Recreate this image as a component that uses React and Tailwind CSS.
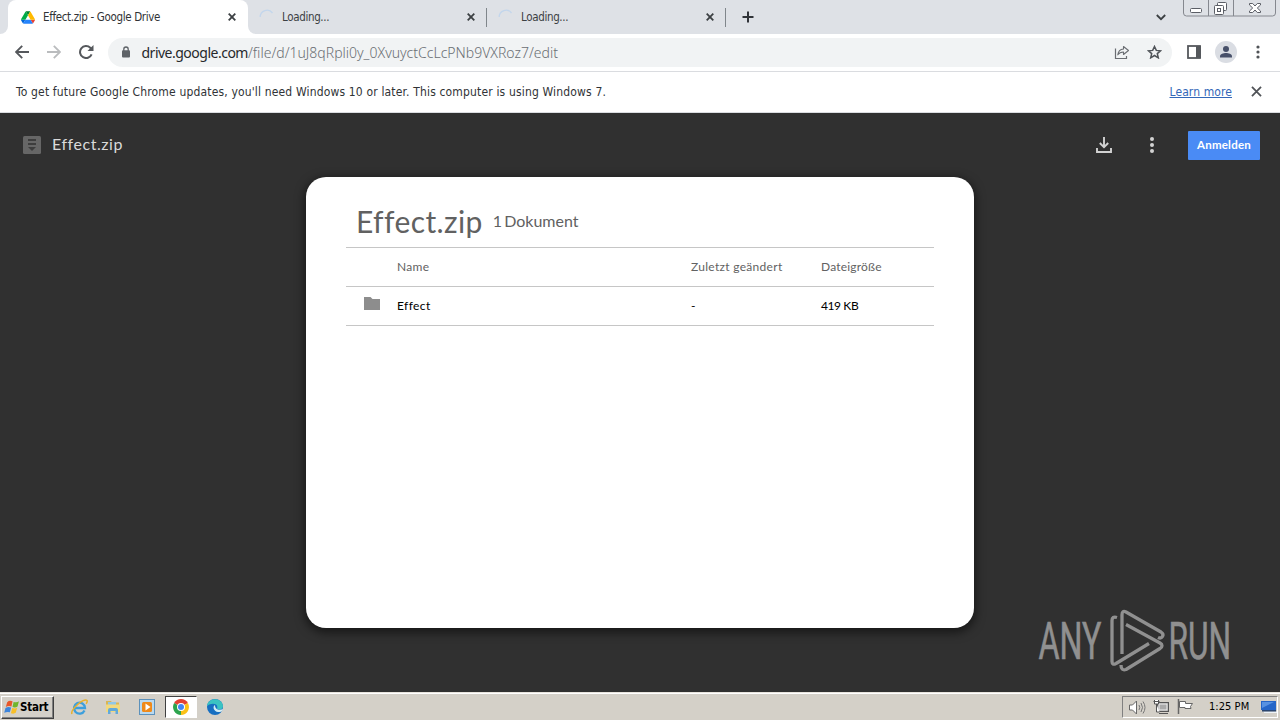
import React from 'react';

const UI_FONT = "font-['DejaVu_Sans_Condensed','DejaVu_Sans',sans-serif]";

// Small x used by the tabs and the info bar
const CloseIcon = ({ size = 8, color = '#3c4043', weight = 1.8 }) => (
  <svg width={size} height={size} viewBox="0 0 8 8" className="shrink-0">
    <path d="M.7.7l6.6 6.6M7.3.7L.7 7.3" stroke={color} strokeWidth={weight} fill="none" />
  </svg>
);

const DriveIcon = () => (
  <svg width="14" height="13" viewBox="0 0 87.3 78" className="shrink-0">
    <path d="m6.6 66.85 3.85 6.65c.8 1.4 1.95 2.5 3.3 3.3l13.75-23.8h-27.5c0 1.55.4 3.1 1.2 4.5z" fill="#0066da" />
    <path d="m43.65 25-13.75-23.8c-1.35.8-2.5 1.9-3.3 3.3l-25.4 44a9.06 9.06 0 0 0-1.2 4.5h27.5z" fill="#00ac47" />
    <path d="m73.55 76.8c1.35-.8 2.5-1.9 3.3-3.3l1.6-2.75 7.65-13.25c.8-1.4 1.2-2.95 1.2-4.5h-27.502l5.852 11.5z" fill="#ea4335" />
    <path d="m43.65 25 13.75-23.8c-1.35-.8-2.9-1.2-4.5-1.2h-18.5c-1.6 0-3.15.45-4.5 1.2z" fill="#00832d" />
    <path d="m59.8 53h-32.3l-13.75 23.8c1.35.8 2.9 1.2 4.5 1.2h50.8c1.6 0 3.15-.45 4.5-1.2z" fill="#2684fc" />
    <path d="m73.4 26.5-12.7-22c-.8-1.4-1.95-2.5-3.3-3.3l-13.75 23.8 16.15 28h27.45c0-1.55-.4-3.1-1.2-4.5z" fill="#ffba00" />
  </svg>
);

const Spinner = () => (
  <svg width="16" height="16" viewBox="0 0 16 16" className="shrink-0">
    <path d="M1.2 8A6.8 6.8 0 0 1 13.5 4" stroke="#c3d6ec" strokeWidth="1.3" fill="none" />
  </svg>
);

const LoadingTab = () => (
  <div className="flex h-[34px] w-[239px] items-center pl-[11px]">
    <Spinner />
    <span className="ml-[7px] flex-1 text-[11.5px] leading-4 tracking-[-0.35px] text-[#3c4043]">Loading...</span>
    <CloseIcon />
    <span className="ml-[11px] h-[19px] w-px bg-[#80868b]" />
  </div>
);

const WindowButtons = () => (
  <svg width="94" height="17" viewBox="0 0 94 17" className="absolute top-0 right-[3px]">
    <path d="M.5 0v13a3 3 0 0 0 3 3h86a3 3 0 0 0 3-3V0M25.5 0v16M50.5 0v16" fill="none" stroke="#85888f" />
    <g fill="#fff" stroke="#5b5e66">
      <rect x="7.500" y="8.500" width="11" height="4" rx="1" />
      <rect x="34.500" y="2.500" width="9" height="8" rx="1" />
      <rect x="31.500" y="5.500" width="9" height="9" rx="1" />
      <rect x="34.500" y="8.500" width="3" height="3" />
      <path d="M66.500 3.500h3.200l2.300 2.500 2.300-2.500h3.200v1.500L74.300 8l3.200 3v1.500h-3.200L72 10l-2.300 2.500h-3.200V11l3.200-3-3.200-3z" />
    </g>
  </svg>
);

const TabStrip = () => (
  <div className="relative flex h-[34px] items-center bg-[#dee1e6]">
    <div className="flex h-full w-2 items-end bg-white">
      <div className="h-full w-full rounded-br-lg bg-[#dee1e6]" />
    </div>
    <div className="flex h-full w-[240px] items-center rounded-t-lg bg-white pr-[12px] pl-[13px]">
      <DriveIcon />
      <span className="ml-[8px] flex-1 text-[11.5px] leading-4 tracking-[-0.35px] text-[#303336]">Effect.zip - Google Drive</span>
      <CloseIcon />
    </div>
    <div className="flex h-full w-[239px] bg-white">
      <div className="h-full w-full rounded-bl-lg bg-[#dee1e6]">
        <LoadingTab />
      </div>
    </div>
    <LoadingTab />
    <svg width="12" height="12" viewBox="0 0 12 12" className="ml-4">
      <path d="M6 .5v11M.5 6h11" stroke="#303338" strokeWidth="2" />
    </svg>
    <svg width="10" height="7" viewBox="0 0 10 7" className="absolute top-[14px] left-[1156px]">
      <path d="M.8 1l4.200 4.200L9.200 1" stroke="#3c4043" strokeWidth="1.800" fill="none" />
    </svg>
    <WindowButtons />
  </div>
);

const Toolbar = () => (
  <div className="flex h-[38px] items-center border-b border-[#dadce0] bg-white pb-px pl-[15px]">
    <svg width="14" height="14" viewBox="0 0 14 14">
      <path d="M14 7H1.500M7.200.8L1 7l6.200 6.200" stroke="#55585c" strokeWidth="1.900" fill="none" />
    </svg>
    <svg width="14" height="14" viewBox="0 0 14 14" className="ml-[18px]">
      <path d="M0 7h12.500M6.800.8L13 7l-6.200 6.200" stroke="#babcbe" strokeWidth="1.800" fill="none" />
    </svg>
    <svg width="15" height="14" viewBox="0 0 15 14" className="ml-[18px]">
      <path d="M12.600 9.300A6 6 0 1 1 11.300 2.800L13 4.500" stroke="#55585c" strokeWidth="2" fill="none" />
      <path d="M14.500 0v6h-6z" fill="#55585c" />
    </svg>
    <div className="ml-[14px] flex h-[29px] w-[1064px] items-center rounded-full bg-[#f1f3f4] pl-[14px]">
      <svg width="8" height="12" viewBox="0 0 8 12">
        <path d="M1.800 5V3.200a2.200 2.200 0 0 1 4.400 0V5" stroke="#5f6368" strokeWidth="1.300" fill="none" />
        <rect y="4.300" width="8" height="7.200" rx="1" fill="#5f6368" />
      </svg>
      <span className="ml-[11.500px] flex-1 pt-px font-['Noto_Sans',sans-serif] text-[14px] leading-5 font-light whitespace-nowrap text-[#6a6e73]">
        <span className="font-normal tracking-[-0.5px] text-[#26282b]">drive.google.com</span>
        <span>/file/d/1uJ8qRpli0y_0XvuyctCcLcPNb9VXRoz7/edit</span>
      </span>
      <svg width="16" height="15" viewBox="0 0 16 15" className="mr-[17px]">
        <path d="M1.500 3.500v10h11V11" stroke="#6a6d72" strokeWidth="1.200" fill="none" />
        <path d="M9.500 1.500l5 4-5 4V7C6.500 7 5 8 3.800 9.800 4.200 6.500 6 4.300 9.500 4z" stroke="#6a6d72" strokeWidth="1.100" fill="none" strokeLinejoin="round" />
      </svg>
      <svg width="15" height="14" viewBox="0 0 15 14" className="mr-[10px]">
        <path d="M7.500 1.500l1.800 3.900 4.200.4-3.200 2.800 1 4.200-3.800-2.300-3.800 2.300 1-4.200L1.500 5.800l4.200-.4z" stroke="#505459" strokeWidth="1.500" fill="none" />
      </svg>
    </div>
    <svg width="14" height="14" viewBox="0 0 14 14" className="ml-[15px]">
      <rect x="1" y="1" width="12" height="12" fill="none" stroke="#55585c" strokeWidth="1.800" />
      <path d="M9 1h5v12H9z" fill="#55585c" />
    </svg>
    <svg width="22" height="22" viewBox="0 0 22 22" className="ml-[14px]">
      <circle cx="11" cy="11" r="11" fill="#dadde3" />
      <circle cx="11" cy="8" r="3" fill="#475069" />
      <path d="M5 16.500v-1.300c0-2 3.500-3.200 6-3.200s6 1.200 6 3.200v1.300z" fill="#475069" />
    </svg>
    <svg width="4" height="14" viewBox="0 0 4 14" className="ml-[19px]" fill="#505357">
      <circle cx="2" cy="2" r="1.600" />
      <circle cx="2" cy="7" r="1.600" />
      <circle cx="2" cy="12" r="1.600" />
    </svg>
  </div>
);

const InfoBar = () => (
  <div className="flex h-[41px] items-center border-b border-[#dadce0] bg-white pr-[18.500px] pb-px pl-4 text-[12px] leading-4">
    <span className="flex-1 tracking-[0.160px] whitespace-nowrap text-[#303336]">
      To get future Google Chrome updates, you'll need Windows 10 or later. This computer is using Windows 7.
    </span>
    <a className="mr-[18.500px] tracking-[0.1px] text-[#3367b8] underline">Learn more</a>
    <CloseIcon size={11} color="#505357" weight={1.300} />
  </div>
);

const ViewerHeader = () => (
  <div className="flex h-16 items-center pr-5 pl-[23px]">
    <svg width="18" height="18" viewBox="0 0 18 18">
      <rect width="18" height="18" rx="1.500" fill="#666" />
      <path d="M5 3h8v2H5zM5 7h8v2H5zM5 11h8l-4 4z" fill="#3d3d3d" />
    </svg>
    <span className="ml-[11px] flex-1 pb-0.5 font-['Lato',sans-serif] text-[16px] leading-5 tracking-[0.550px] text-[#dadada]">Effect.zip</span>
    <svg width="16" height="16" viewBox="0 0 16 16">
      <path d="M8 0v10M3.800 6L8 10.200 12.200 6M1 11v4h14v-4" stroke="#d2d2d2" strokeWidth="1.900" fill="none" />
    </svg>
    <svg width="4" height="16" viewBox="0 0 4 16" className="ml-[38px]" fill="#d2d2d2">
      <circle cx="2" cy="2" r="2" />
      <circle cx="2" cy="8" r="2" />
      <circle cx="2" cy="14" r="2" />
    </svg>
    <button className="ml-[34px] h-[29px] w-[72px] rounded-[1px] bg-[#4a8bf5] font-['Lato',sans-serif] text-[11.5px] font-bold tracking-[0.2px] text-white">Anmelden</button>
  </div>
);

const Row = ({ icon, name, modified, size, className, sizeClass = '' }) => (
  <div className={`flex h-[39px] items-center border-b border-[#c6c6c6] text-[12px] leading-4 ${className}`}>
    <div className="w-[51px] pl-[18px]">{icon}</div>
    <div className="w-[294px]">{name}</div>
    <div className="w-[130px]">{modified}</div>
    <div className={sizeClass}>{size}</div>
  </div>
);

const FolderIcon = () => (
  <svg width="16" height="13" viewBox="0 0 16 13" className="mb-[5px]">
    <path d="M0 0h6.500l2 2H16v11H0z" fill="#8d8d8d" />
  </svg>
);

const ArchiveCard = () => (
  <div className="mx-auto h-[451px] w-[668px] rounded-[20px] bg-white px-10 pt-[21px] font-['Lato',sans-serif] shadow-[0_3px_10px_2px_rgba(0,0,0,0.5)]">
    <div className="flex h-[50px] items-center border-b border-[#c6c6c6] pb-[3px] pl-[10px] text-[#616161]">
      <h1 className="text-[30px] leading-9 tracking-[0.400px]">Effect.zip</h1>
      <span className="ml-[10px] text-[16px] leading-5 [word-spacing:-2px]">1 Dokument</span>
    </div>
    <Row name="Name" modified="Zuletzt geändert" size="Dateigröße" className="tracking-[0.300px] text-[#626262]" sizeClass="tracking-[0.200px]" />
    <Row icon={<FolderIcon />} name="Effect" modified="-" size="419 KB" className="tracking-[0.400px] text-black" sizeClass="tracking-[-0.400px]" />
  </div>
);

const Watermark = () => (
  <svg width="200" height="64" viewBox="0 0 200 64" className="absolute top-[496px] left-[1038px] overflow-visible" fill="#909090">
    <g fontFamily="Roboto, sans-serif" fontSize="52" stroke="#909090" strokeWidth="0.6">
      <text y="50" transform="translate(.5) scale(.62 1)">ANY</text>
      <text y="50" transform="translate(130.500) scale(.61 1)">RUN</text>
    </g>
    <g fill="none" stroke="#909090" strokeWidth="3.300" strokeLinejoin="round">
      <path d="M79 8.500q-5-1.500-5 3v41q0 4 4 2l33-20" />
      <path d="M84 45V6q0-5 4-3l35 20q3 2 1.500 4.500-1.500 2.500-4.500 1" />
      <path d="M83 56q0 6 5 4.500l34-21q4-3 0-5.500L88 15.500" />
    </g>
  </svg>
);

const ChromeIcon = () => (
  <svg width="16" height="16" viewBox="0 0 16 16">
    <path d="M8 8L1.100 4a8 8 0 0 1 13.800 0z" fill="#e34133" />
    <path d="M8 8l6.900-4A8 8 0 0 1 8 16z" fill="#fbc116" />
    <path d="M8 8v8A8 8 0 0 1 1.100 4z" fill="#2da44e" />
    <circle cx="8" cy="8" r="4" fill="#fff" />
    <circle cx="8" cy="8" r="3" fill="#4285f4" />
  </svg>
);

const Taskbar = () => (
  <div className="flex h-7 items-center border-t border-[#e8e4dd] bg-[#d4d0c8] pt-px shadow-[inset_0_1px_0_#fff]">
    <button className="ml-px flex h-[23px] w-[53px] items-center border border-t-white border-r-[#404040] border-b-[#404040] border-l-white pl-[2px] text-[11.5px] font-bold tracking-[-0.250px] text-black shadow-[inset_-1px_-1px_0_#808080]">
      <svg width="16" height="16" viewBox="0 0 15 15" className="shrink-0">
        <path d="M3 3q2-2 5-.8L7 7Q4 6 1.700 7.500z" fill="#e8572a" />
        <path d="M9 2.700q3 1 5-.5L12.700 7q-2 1.500-4.700.5z" fill="#70b52b" />
        <path d="M1.400 8.500q2.300-1.500 5.300-.5L5.500 12.500Q3 11.500.2 13z" fill="#3d85dc" />
        <path d="M7.700 8.500q3 1 4.700-.3L11 13q-2 1.300-4.500.3z" fill="#f8bf27" />
      </svg>
      <span className="pt-px">Start</span>
    </button>
    <svg width="17" height="17" viewBox="0 0 17 17" className="ml-[17px]">
      <path d="M13.500 11.500A5.500 5.500 0 1 1 14 9H4" stroke="#3d9fdc" strokeWidth="2.300" fill="none" />
      <path d="M1 15C-1 11 13-2 16 1.500c.7 1-.3 2.500-.8 3.300" stroke="#e8b12b" strokeWidth="1.500" fill="none" />
    </svg>
    <svg width="16" height="16" viewBox="0 0 16 16" className="ml-[17px]">
      <path d="M1 2h5l1 1.500h7V13H1z" fill="#d9b655" />
      <path d="M3 3h8v4H3z" fill="#8fc7e8" />
      <path d="M1 5.500h14V13H1z" fill="#f2d97f" />
      <path d="M3 15v-4q0-2 2-2h6q2 0 2 2v4h-2.500v-3h-5v3z" fill="#62a9da" />
    </svg>
    <svg width="16" height="16" viewBox="0 0 16 16" className="ml-[18px]">
      <rect x=".500" y=".500" width="15" height="15" fill="#b9d9f0" stroke="#5c91bb" />
      <rect x="3" y="3" width="10" height="10" rx="1.500" fill="#ef8a1a" />
      <path d="M6.500 4.500v7l5-3.500z" fill="#fff" />
    </svg>
    <div className="ml-[10px] flex h-[22px] w-[32px] items-center justify-center border border-t-[#404040] border-r-white border-b-white border-l-[#404040] bg-white">
      <ChromeIcon />
    </div>
    <svg width="16" height="16" viewBox="0 0 16 16" className="ml-[10px]">
      <circle cx="8" cy="8" r="8" fill="#176fc1" />
      <path d="M0 7C1-2 15-2 16 7c0 4-5 4-6 2.500C12 5 5 3 0 7z" fill="#3bc3c2" />
      <path d="M8 6c-3 2-1 6.500 3 7 2 .2 3.500-.4 4.300-1.200L16 10c-3 1.500-8 1-8-4z" fill="#d4edf5" />
    </svg>
    <div className="mr-[2px] ml-auto flex h-[22px] w-[156px] items-center border border-t-[#808080] border-r-white border-b-white border-l-[#808080] pl-[6px]">
      <svg width="17" height="15" viewBox="0 0 17 15">
        <path d="M.500 5h3L7.500 1v13l-4-4h-3z" fill="#fff" stroke="#686868" />
        <path d="M10 5q1.500 2.500 0 5M12 3q3 4.500 0 9M14 1.500q4 6 0 12" fill="none" stroke="#777" />
      </svg>
      <svg width="17" height="16" viewBox="0 0 17 16" className="ml-[7px]">
        <rect x="4.500" y="3.500" width="11" height="9" fill="#989898" stroke="#555" />
        <rect x="6" y="5" width="8" height="6" fill="#aaa" stroke="#eee" />
        <path d="M6 14.500h9M1.500 1v4h4V1M3.500 5v8h3M.500 2.500h6" stroke="#555" fill="#fff" />
      </svg>
      <svg width="17" height="16" viewBox="0 0 17 16" className="ml-[7px]">
        <path d="M1.500 0v15" stroke="#666" strokeWidth="1.500" />
        <path d="M2.500 2.500h6v2h7l-2 3 .500 2h-6v-1h-5.500z" fill="#fff" stroke="#666" />
      </svg>
      <span className="ml-[15px] text-[11px] tracking-[0.050px] whitespace-nowrap text-black">1:25 PM</span>
      <svg width="16" height="14" viewBox="0 0 16 14" className="ml-auto">
        <path d="M0 1h15v9H0z" fill="#2566c8" />
        <path d="M1 2h12L1 8z" fill="#5792e2" />
        <path d="M3 11.500h13v1.500H3z" fill="#eef3f7" />
        <path d="M1 10h14v1.500H1z" fill="#2b4670" />
      </svg>
    </div>
  </div>
);

const App = () => (
  <div className={`flex h-[720px] w-[1280px] flex-col overflow-hidden ${UI_FONT}`}>
    <TabStrip />
    <Toolbar />
    <InfoBar />
    <main className="relative flex-1 bg-[#303030]">
      <ViewerHeader />
      <ArchiveCard />
      <Watermark />
    </main>
    <Taskbar />
  </div>
);

export default App;
